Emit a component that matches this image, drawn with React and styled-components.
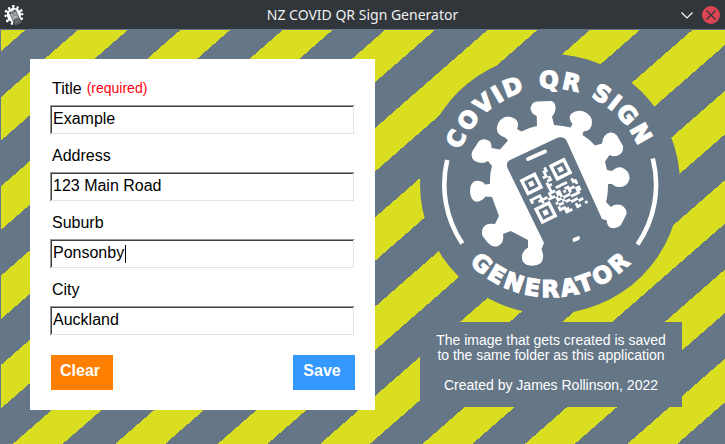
import React, { useState } from "react";
import styled, { createGlobalStyle, css } from "styled-components";

const SLATE = "#657687";
const LIME = "#d9de21";

const GlobalStyle = createGlobalStyle`
  * { box-sizing: border-box; }
  html, body { margin: 0; background: ${SLATE}; }
  body { font-family: "Liberation Sans", Arial, sans-serif; font-size: 16px; color: #000; }
`;

const Window = styled.div`
  display: flex;
  flex-direction: column;
  min-height: 100vh;
`;

const TitleBar = styled.header`
  display: grid;
  grid-template-columns: 48px 1fr 48px;
  align-items: center;
  height: 29px;
  background: #31363b;
  color: #eff0f1;
`;

const AppIcon = styled.svg`
  width: 20px;
  height: 20px;
  margin-left: 4px;
`;

const WindowTitle = styled.h1`
  margin: 0;
  font: 400 14px/28px "Noto Sans", sans-serif;
  text-align: center;
`;

const WindowButtons = styled.div`
  display: flex;
  justify-content: flex-end;
  gap: 6px;
  padding-right: 5px;
`;

const WindowButton = styled.button`
  display: block;
  width: 18px;
  height: 18px;
  padding: 0;
  border: 0;
  background: none;
  svg { display: block; width: 18px; height: 18px; }
`;

const Stage = styled.main`
  position: relative;
  flex: 1;
  display: grid;
  grid-template-columns: minmax(0, 345fr) minmax(0, 262fr);
  align-items: start;
  column-gap: 45px;
  padding: 24px 43px 34px 29px;
  border: solid #66788a;
  border-width: 1px 0 0 1px;
`;

const Stripes = styled.svg`
  position: absolute;
  inset: 0;
  width: 100%;
  height: 100%;
`;

const Form = styled.form`
  position: relative;
  display: grid;
  gap: 10px;
  margin-top: 5px;
  padding: 19px 20px 20px;
  background: #fff;
`;

const Field = styled.div`
  display: grid;
  gap: 6px;
`;

const Label = styled.label`
  display: flex;
  gap: 5px;
  padding-left: 2px;
  line-height: 21px;
`;

const Required = styled.span`
  font-size: 14px;
  color: #ff0010;
`;

const TextBox = styled.input`
  width: 100%;
  height: 30px;
  padding: 0 2px 3px;
  border: 1px solid;
  border-color: #999 #fff #fff #999;
  border-radius: 0;
  outline: 0;
  box-shadow: inset -1px -1px #e3e3e3, inset 1px 1px #404040;
  background: #fff;
  font: inherit;
  color: #000;
  ${(p) => p.$caret && css`
    background: linear-gradient(#000, #000) 74px 5px / 1px 18px no-repeat #fff;
  `}
`;

const Actions = styled.div`
  display: flex;
  justify-content: space-between;
  margin-top: 9px;
  padding-left: 1px;
`;

const ActionButton = styled.button`
  width: 62px;
  height: 35px;
  padding: 0 4px 4px 0;
  border: 0;
  background: ${(p) => p.$color};
  color: #fff;
  font: inherit;
  font-weight: 700;
`;

const Side = styled.section`
  position: relative;
  display: grid;
  gap: 8px;
`;

const Logo = styled.svg`
  display: block;
  width: 100%;
`;

const BadgeText = styled.text`
  font: 700 23px "DejaVu Sans", sans-serif;
  fill: #fff;
  stroke: #fff;
  stroke-width: 1.4px;
  text-anchor: middle;
`;

const Info = styled.div`
  display: grid;
  gap: 15px;
  padding: 11px 0 14px;
  background: ${SLATE};
  color: #fff;
  font-size: 14px;
  line-height: 15px;
  text-align: center;
  p { margin: 0; }
`;

const QR_ROWS = [
  "...........#.........",
  "..........##.........",
  "..........#..........",
  ".........##..........",
  "...........#.........",
  "..........##.........",
  ".........#...........",
  ".........##..........",
  ".........#...........",
  "#####....#..#####..#.",
  "#...#...###........##",
  "...####.#..##..##...#",
  "....#..###.##.#.###..",
  "..........#.#...#..##",
  "..........##.###...##",
  ".........#..#...####.",
  "..........##.##......",
  ".........#.....###...",
  ".........###......##.",
  "...........##...#....",
  "...........###..##..#",
];

const qrPath = QR_ROWS.map((row, y) =>
  [...row].map((c, x) => (c === "#" ? `M${x} ${y}h1.15v1.15h-1.15z` : "")).join("")
).join("");

function Finder({ x, y }) {
  return (
    <g transform={`translate(${x} ${y})`}>
      <rect x="0.700" y="0.700" width="5.900" height="5.900" fill="none" stroke="#fff" strokeWidth="1.400" />
      <rect x="2.600" y="2.600" width="2.100" height="2.100" fill="#fff" />
    </g>
  );
}

function Virus({ phone }) {
  return (
    <g>
      <path fill="#fff" d="M537 126L536.7 116Q530.5 113 530.5 108Q532 101.500 537 101.500L551 101Q556 102 555.500 109Q555 114 552 116.500L554 125Q563 125.500 570.500 127.500L572.500 124Q567.500 118 571.500 113.500Q577 109 585 112Q592 116 592 122Q592 131 583.500 131.500L582.500 135Q590 139.500 595 145.500L602 143.500Q603 134 610 132.500Q614 132 617 135.500L623 146Q624 154 616.500 156Q611 156.500 609.500 155L605 161.500L607 170L612 171Q617 166 622 167.500Q630 171 629.500 179Q627 188 618 187Q614 186.500 612 184L608 184Q608 195 606 202L611 207Q615 203.500 621 205Q627 208 626.500 214L621 225Q616 230 610 227.500Q606.500 225 607 220.500L602 219L544 243L541.500 249Q545 258 541 263Q536 267 527 265Q521 262 522 255Q523.500 250 528 247.500L528 240L510.700 231L503 234Q504.500 243 498 246Q493 248 488 243L482.500 236Q480 227 488 224Q491 223.500 495 224L499 216L492 197L485.500 196.500Q481 202.500 475 201.500Q470.500 199 470 192Q470 183 475 181Q482 180 485 184.500L490 184Q489.500 174 492 166L488 161Q481 165 474 160.500Q470 156 472.500 151L479 141Q484 137.500 490 141.500Q492 145 491.500 148L500 149.500L508 140.500L505 137.500Q496 135 497 127Q499 118 507 116.500Q516 117 518 123Q518 128 517 129L521.500 131.500Q529 127.500 537 126Z" />
      <path fill={phone} d="M507.500 168Q505.500 162.500 510 160L558 137.500Q564 136 566.500 140.500L602 219L617 250L558 272L544 243Z" />
      <path stroke="#fff" strokeWidth="4" strokeLinecap="round" d="M528 159L545 151.500M574.500 239.800L578 238.200" />
      <g transform="translate(519.500 180) rotate(-26.600) scale(2.420)">
        <path fill="#fff" d={qrPath} />
        <Finder x={0} y={0} />
        <Finder x={13.5} y={0} />
        <Finder x={0} y={13.2} />
      </g>
    </g>
  );
}

function Badge() {
  return (
    <Logo viewBox="420 54 262 260" role="img" aria-label="Covid QR Sign Generator">
      <defs>
        <path id="arc-top" d="M466 184A84 84 0 0 1 634 184" />
        <path id="arc-bottom" d="M453 184A97 97 0 0 0 647 184" />
      </defs>
      <circle cx="550" cy="184" r="130" fill={SLATE} />
      <path fill="none" stroke="#fff" strokeWidth="4.600" d="M447.200 160A105.600 105.600 0 0 0 462.300 243.500M652.800 158.500A105.600 105.600 0 0 1 637.500 244.500" />
      <Virus phone={SLATE} />
      <BadgeText><textPath href="#arc-top" startOffset="26.500%"><tspan dy="-12">COVID</tspan></textPath></BadgeText>
      <BadgeText><textPath href="#arc-top" startOffset="53%"><tspan dy="-12">QR</tspan></textPath></BadgeText>
      <BadgeText><textPath href="#arc-top" startOffset="75.500%"><tspan dy="-12">SIGN</tspan></textPath></BadgeText>
      <BadgeText><textPath href="#arc-bottom" startOffset="50%"><tspan dy="16">GENERATOR</tspan></textPath></BadgeText>
    </Logo>
  );
}

const FIELDS = [
  { id: "title", label: "Title", required: true },
  { id: "address", label: "Address" },
  { id: "suburb", label: "Suburb", caret: true },
  { id: "city", label: "City" },
];

const EMPTY = { title: "", address: "", suburb: "", city: "" };

export default function App() {
  const [values, setValues] = useState({
    title: "Example",
    address: "123 Main Road",
    suburb: "Ponsonby",
    city: "Auckland",
  });

  return (
    <Window>
      <GlobalStyle />
      <TitleBar>
        <AppIcon viewBox="468 100 164 168" aria-hidden="true">
          <Virus phone="#5b6064" />
        </AppIcon>
        <WindowTitle>NZ COVID QR Sign Generator</WindowTitle>
        <WindowButtons>
          <WindowButton type="button" aria-label="Minimize">
            <svg viewBox="0 0 18 18" fill="none" stroke="#fcfcfc" strokeWidth="1.2">
              <path d="M3.500 6.500L9 12L14.500 6.500" />
            </svg>
          </WindowButton>
          <WindowButton type="button" aria-label="Close">
            <svg viewBox="0 0 18 18" fill="none" stroke="#31363b" strokeWidth="1.2">
              <circle cx="9" cy="9" r="9" fill="#da4453" stroke="none" />
              <path d="M4.500 4.500L13.500 13.500M13.500 4.500L4.500 13.500" />
            </svg>
          </WindowButton>
        </WindowButtons>
      </TitleBar>
      <Stage>
        <Stripes aria-hidden="true">
          <defs>
            <linearGradient id="hazard" gradientUnits="userSpaceOnUse" spreadMethod="repeat" x1="-11.060" y1="-12.680" x2="33.180" y2="38.050">
              <stop offset="0" stopColor={LIME} />
              <stop offset="0.487" stopColor={LIME} />
              <stop offset="0.487" stopColor={SLATE} />
              <stop offset="1" stopColor={SLATE} />
            </linearGradient>
          </defs>
          <rect width="100%" height="100%" fill="url(#hazard)" />
        </Stripes>
        <Form onSubmit={(e) => e.preventDefault()}>
          {FIELDS.map((f) => (
            <Field key={f.id}>
              <Label htmlFor={f.id}>
                <span>{f.label}</span>
                {f.required && <Required>(required)</Required>}
              </Label>
              <TextBox
                id={f.id}
                type="text"
                $caret={f.caret && values[f.id] === "Ponsonby"}
                value={values[f.id]}
                onChange={(e) => setValues({ ...values, [f.id]: e.target.value })}
              />
            </Field>
          ))}
          <Actions>
            <ActionButton type="button" $color="#ff8000" onClick={() => setValues(EMPTY)}>Clear</ActionButton>
            <ActionButton type="submit" $color="#3399ff">Save</ActionButton>
          </Actions>
        </Form>
        <Side>
          <Badge />
          <Info>
            <p>The image that gets created is saved<br />to the same folder as this application</p>
            <p>Created by James Rollinson, 2022</p>
          </Info>
        </Side>
      </Stage>
    </Window>
  );
}
